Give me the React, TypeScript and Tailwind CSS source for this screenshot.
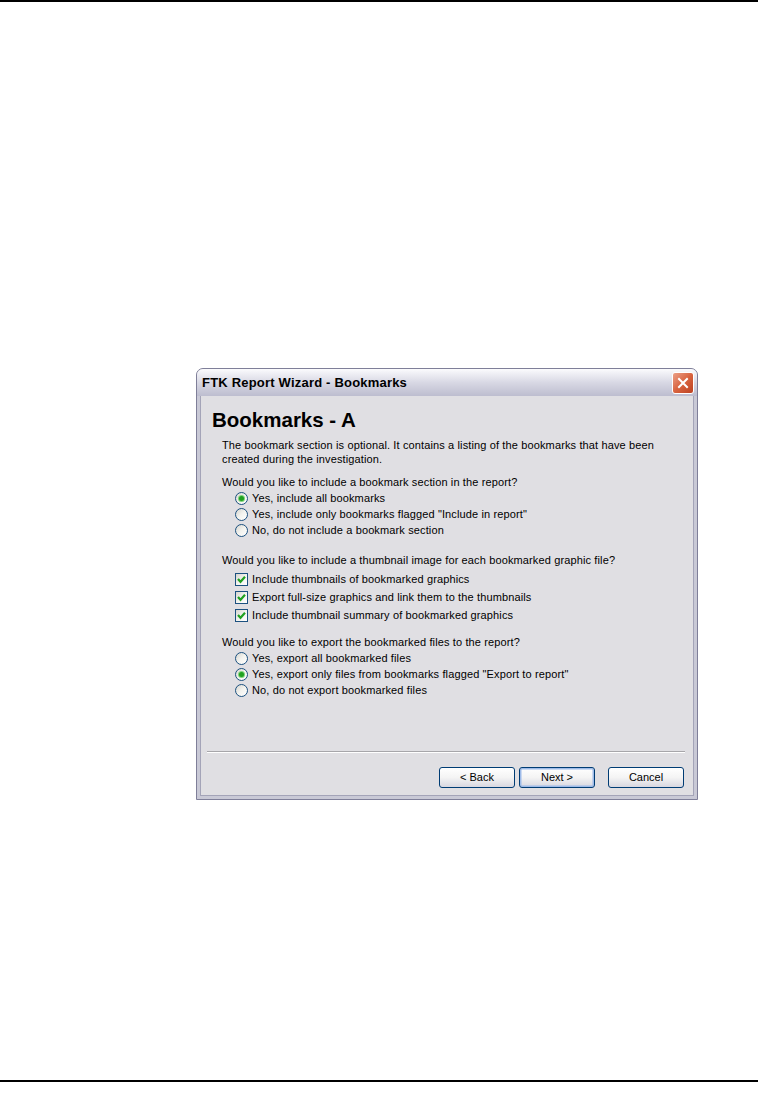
import React from "react";

function Radio({ checked }: { checked?: boolean }) {
  return (
    <span className="flex h-[13px] w-[13px] shrink-0 items-center justify-center rounded-full border border-[#1c5180] bg-gradient-to-br from-[#d6d5cf] via-[#f3f3ef] to-white">
      {checked && (
        <span className="h-[5px] w-[5px] rounded-full bg-[#21a121] shadow-[0_0_0_1px_#7ed37c]" />
      )}
    </span>
  );
}

function Check() {
  return (
    <span className="flex h-[13px] w-[13px] shrink-0 items-center justify-center border border-[#1c5180] bg-gradient-to-br from-[#d6d5cf] via-[#f3f3ef] to-white">
      <svg width="11" height="11" viewBox="0 0 11 11">
        <polyline points="2,5 4.5,7.8 9,2.8" fill="none" stroke="#21a121" strokeWidth="2.2" />
      </svg>
    </span>
  );
}

function RadioRow({ label, checked }: { label: string; checked?: boolean }) {
  return (
    <div className="flex h-4 items-center leading-4">
      <Radio checked={checked} />
      <span className="ml-[4px]">{label}</span>
    </div>
  );
}

function CheckRow({ label }: { label: string }) {
  return (
    <div className="flex h-[18px] items-center leading-[18px]">
      <Check />
      <span className="ml-[4px]">{label}</span>
    </div>
  );
}

function Button({ label, primary }: { label: string; primary?: boolean }) {
  return (
    <div
      className={
        "flex h-[21px] w-[76px] items-center justify-center rounded-[3px] border border-[#003c74] bg-gradient-to-b from-white via-[#f4f4f4] to-[#d8d7e0] text-[11px] " +
        (primary ? "shadow-[inset_0_0_0_1.5px_#9ebbe9]" : "")
      }
    >
      {label}
    </div>
  );
}

export default function App() {
  return (
    <div className="h-[1117px] w-[758px] bg-white font-['Liberation_Sans',Arial,sans-serif] text-black">
      <div className="h-[2px] bg-black" />

      <div className="ml-[196px] mt-[366px] flex h-[432px] w-[502px] flex-col rounded-t-[7px] border border-[#7f7f99] bg-[#c9c9d6]">
        {/* title bar */}
        <div className="flex h-[27px] items-center justify-between rounded-t-[6px] bg-gradient-to-b from-[#fbfbfd] via-[#d8d8e4] to-[#bdbdcf] pl-[5px] pr-[3px]">
          <span className="text-[13px] font-bold tracking-[0.2px]">FTK Report Wizard - Bookmarks</span>
          <div className="flex h-[22px] w-[22px] items-center justify-center rounded-[3px] border border-white bg-gradient-to-br from-[#eba088] via-[#d8633f] to-[#bd4120]">
            <svg width="12" height="12" viewBox="0 0 12 12">
              <path d="M2 2 L10 10 M10 2 L2 10" stroke="white" strokeWidth="2" strokeLinecap="square" />
            </svg>
          </div>
        </div>

        {/* body */}
        <div className="mx-[3px] mb-[3px] flex h-[400px] flex-col border-x border-b border-[#a4a4b8] bg-[#e0dfe3] text-[11px] tracking-[0.13px]">
          <h1 className="mt-[12px] pl-[11px] text-[20.5px] font-bold leading-6 tracking-normal">Bookmarks - A</h1>
          <p className="mt-[6px] pl-[21px] pr-[30px] leading-[14px]">
            The bookmark section is optional. It contains a listing of the bookmarks that have been
            <br />
            created during the investigation.
          </p>

          <p className="mt-[9px] pl-[21px] leading-[14px]">Would you like to include a bookmark section in the report?</p>
          <div className="mt-[1px] pl-[34px]">
            <RadioRow label="Yes, include all bookmarks" checked />
            <RadioRow label={'Yes, include only bookmarks flagged "Include in report"'} />
            <RadioRow label="No, do not include a bookmark section" />
          </div>

          <p className="mt-[15px] pl-[21px] leading-[14px]">
            Would you like to include a thumbnail image for each bookmarked graphic file?
          </p>
          <div className="mt-[3px] pl-[34px]">
            <CheckRow label="Include thumbnails of bookmarked graphics" />
            <CheckRow label="Export full-size graphics and link them to the thumbnails" />
            <CheckRow label="Include thumbnail summary of bookmarked graphics" />
          </div>

          <p className="mt-[11px] pl-[21px] leading-[14px]">Would you like to export the bookmarked files to the report?</p>
          <div className="mt-[1px] pl-[34px]">
            <RadioRow label="Yes, export all bookmarked files" />
            <RadioRow label={'Yes, export only files from bookmarks flagged "Export to report"'} checked />
            <RadioRow label="No, do not export bookmarked files" />
          </div>

          <div className="ml-[6px] mr-[8px] mt-[53px] border-t border-b border-t-[#a7a6aa] border-b-white" />

          <div className="mr-[9px] mt-[14px] flex justify-end tracking-normal">
            <Button label="< Back" />
            <div className="ml-[4px]">
              <Button label="Next >" primary />
            </div>
            <div className="ml-[13px]">
              <Button label="Cancel" />
            </div>
          </div>
        </div>
      </div>

      <div className="mt-[280px] h-[2px] bg-black" />
    </div>
  );
}
